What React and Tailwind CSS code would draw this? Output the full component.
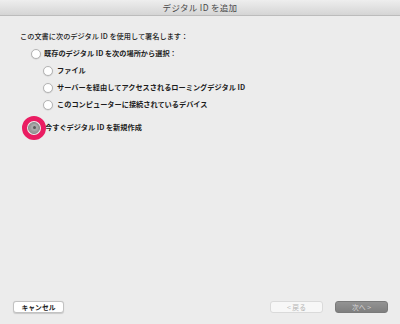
import React from 'react';

const font = { fontFamily: '"Noto Sans CJK JP", "Noto Sans", sans-serif' };

// Plain macOS style radio (unselected)
const Radio = () => (
    <span className="w-[10px] h-[10px] rounded-full bg-white border border-[#b4b4b4] shadow-[0_0.5px_1px_rgba(0,0,0,0.15)] shrink-0" />
);

const Row = ({ indent, children }) => (
    <div className={`flex items-center h-[17px] ${indent}`}>{children}</div>
);

export default function App() {
    return (
        <div className="w-[400px] h-[324px] bg-[#ececec] flex flex-col overflow-hidden" style={font}>

            {/* Window title bar */}
            <div className="h-[16px] shrink-0 flex items-center justify-center bg-gradient-to-b from-[#eeeeee] to-[#d5d5d5] border-b border-[#bcbcbc]">
                <span className="text-[8.5px] leading-none text-[#4a4a4a] tracking-[0.3px]">デジタル ID を追加</span>
            </div>

            {/* Options */}
            <div className="pt-[12px] flex flex-col text-[7.2px] leading-none text-[#1c1c1c]">
                <Row indent="pl-[20px]">
                    <span className="font-medium">この文書に次のデジタル ID を使用して署名します：</span>
                </Row>
                <Row indent="pl-[31px] gap-[3px]">
                    <Radio />
                    <span className="font-bold">既存のデジタル ID を次の場所から選択：</span>
                </Row>
                <Row indent="pl-[43px] gap-[4px]">
                    <Radio />
                    <span className="font-bold">ファイル</span>
                </Row>
                <Row indent="pl-[43px] gap-[4px]">
                    <Radio />
                    <span className="font-bold">サーバーを経由してアクセスされるローミングデジタル ID</span>
                </Row>
                <Row indent="pl-[43px] gap-[4px]">
                    <Radio />
                    <span className="font-bold">このコンピューターに接続されているデバイス</span>
                </Row>
                <div className="flex items-center h-[17px] mt-[6px] pl-[28px] gap-[5px]">
                    <span className="relative w-[12px] h-[12px] shrink-0">
                        <span className="absolute inset-0 rounded-full bg-[#9b9b9b] border border-[#8a8a8a] flex items-center justify-center">
                            <span className="w-[7px] h-[7px] rounded-full bg-[#a9a9a9] flex items-center justify-center">
                                <span className="w-[3px] h-[3px] rounded-full bg-[#5a5a5a]" />
                            </span>
                        </span>
                        {/* pink highlight ring */}
                        <span className="absolute -left-[6px] -top-[6px] w-[24px] h-[24px] rounded-full border-[5px] border-[#ea1d62] z-10" />
                    </span>
                    <span className="font-bold">今すぐデジタル ID を新規作成</span>
                </div>
            </div>

            <div className="flex-1" />

            {/* Footer buttons */}
            <div className="flex items-center justify-between pl-[13px] pr-[12px] mb-[11px] text-[6.8px] leading-none">
                <button className="w-[51px] h-[12px] rounded-[3px] bg-white border border-[#c2c2c2] shadow-[0_0.5px_1px_rgba(0,0,0,0.15)] text-[#222] font-bold flex items-center justify-center">
                    キャンセル
                </button>
                <div className="flex items-center gap-[12px]">
                    <button className="w-[53px] h-[12px] rounded-[3px] bg-[#f7f7f7] border border-[#dadada] text-[#b4b4b4] flex items-center justify-center">
                        &lt; 戻る
                    </button>
                    <button className="w-[53px] h-[12px] rounded-[3px] bg-gradient-to-b from-[#939393] to-[#7f7f7f] border border-[#7a7a7a] text-[#d8d8d8] flex items-center justify-center">
                        次へ &gt;
                    </button>
                </div>
            </div>
        </div>
    );
}
